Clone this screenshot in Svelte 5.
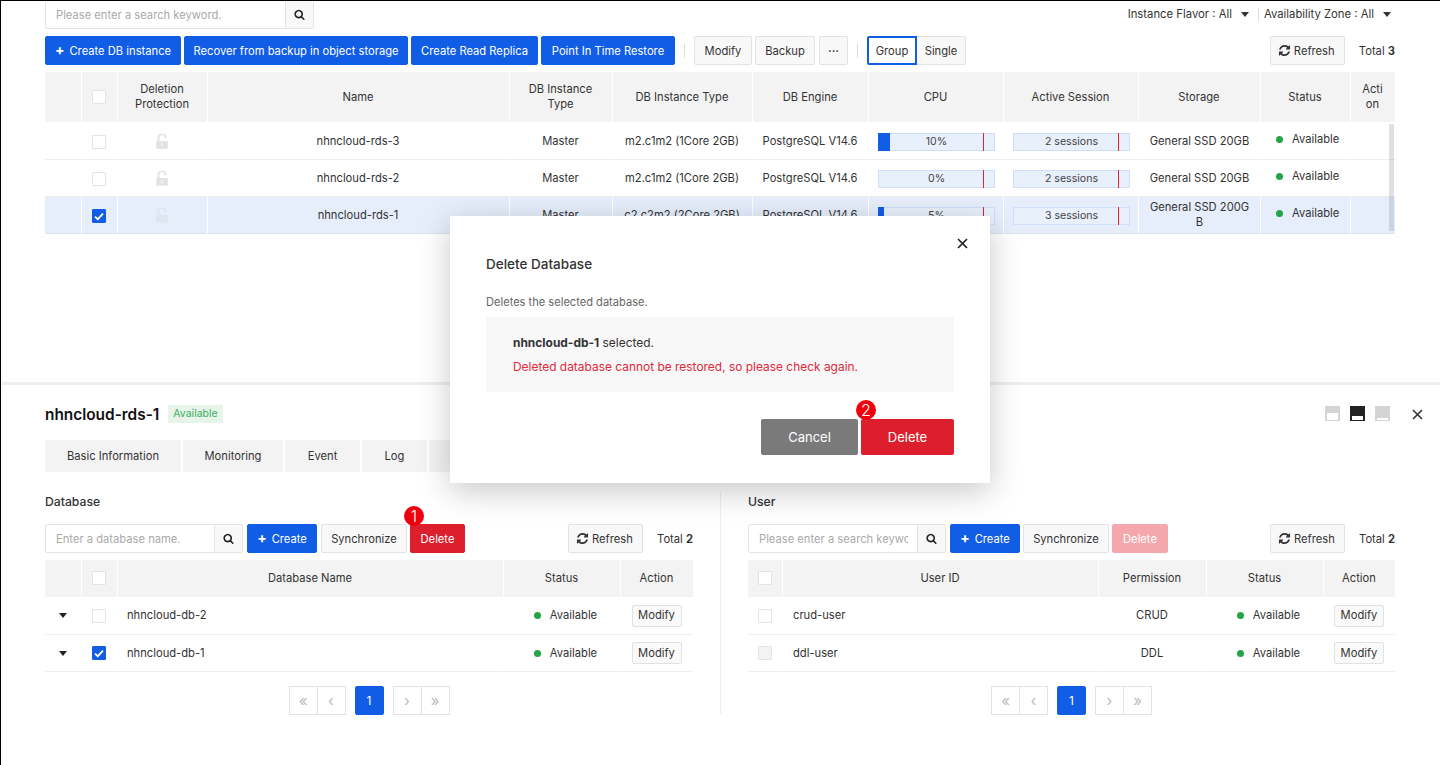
<script>
  const searchD = "M1216 832q0-185-131.5-316.5t-316.5-131.5-316.5 131.5-131.5 316.5 131.5 316.5 316.5 131.5 316.5-131.5 131.5-316.5zm512 832q0 52-38 90t-90 38q-54 0-90-38l-343-342q-179 124-399 124-143 0-273.5-55.5t-225-150-150-225-55.5-273.5 55.5-273.5 150-225 225-150 273.5-55.5 273.5 55.5 225 150 150 225 55.5 273.5q0 220-124 399l343 343q37 37 37 90z";
  const refreshD = "M1639 1056q0 5-1 7-64 268-268 434.5t-478 166.5q-146 0-282.5-55t-243.5-157l-129 129q-19 19-45 19t-45-19-19-45v-448q0-26 19-45t45-19h448q26 0 45 19t19 45-19 45l-137 137q71 66 161 102t187 36q134 0 250-65t186-179q11-17 53-117 8-23 30-23h192q13 0 22.5 9.5t9.5 22.5zm25-800v448q0 26-19 45t-45 19h-448q-26 0-45-19t-19-45 19-45l138-138q-148-137-349-137-134 0-250 65t-186 179q-11 17-53 117-8 23-30 23h-199q-13 0-22.5-9.5t-9.5-22.5v-7q65-268 270-434.5t480-166.5q146 0 284 55.5t245 156.5l130-129q19-19 45-19t45 19 19 45z";
  const unlockD = "M1376 768q40 0 68 28t28 68v576q0 40-28 68t-68 28h-960q-40 0-68-28t-28-68v-576q0-40 28-68t68-28h32v-320q0-185 131.5-316.5t316.5-131.5 316.5 131.5 131.5 316.5q0 26-19 45t-45 19h-64q-26 0-45-19t-19-45q0-106-75-181t-181-75-181 75-75 181v320h736z";

  const instances = [
    { name: "nhncloud-rds-3", type: "m2.c1m2 (1Core 2GB)", cpu: 10, session: "2 sessions", storage: "General SSD 20GB", sel: false },
    { name: "nhncloud-rds-2", type: "m2.c1m2 (1Core 2GB)", cpu: 0, session: "2 sessions", storage: "General SSD 20GB", sel: false },
    { name: "nhncloud-rds-1", type: "c2.c2m2 (2Core 2GB)", cpu: 5, session: "3 sessions", storage: "General SSD 200GB", sel: true }
  ];
  const instanceCols = [37, 36, 90, 302, 103, 140, 116, 135, 135, 122, 90, 44];
  const tabs = [
    { label: "Basic Information", w: 136 },
    { label: "Monitoring", w: 100 },
    { label: "Event", w: 75 },
    { label: "Log", w: 65 },
    { label: "Backup", w: 90 }
  ];
  const dbs = [{ name: "nhncloud-db-2", sel: false }, { name: "nhncloud-db-1", sel: true }];
  const users = [
    { name: "crud-user", perm: "CRUD", off: false },
    { name: "ddl-user", perm: "DDL", off: true }
  ];
</script>

{#snippet search(d, size)}
  <svg width={size} height={size} viewBox="0 0 1792 1792" fill="#222"><path {d} /></svg>
{/snippet}

{#snippet refreshBtn()}
  <button class="btn refresh"><svg class="ri" width="13" height="13" viewBox="0 0 1792 1792" fill="#333"><path d={refreshD} /></svg>Refresh</button>
{/snippet}

{#snippet check(on, off)}
  <span class="cb" class:on class:off>
    {#if on}
      <svg width="10" height="9" viewBox="0 0 10 9"><path d="M1 4.6 3.8 7.2 9 1.6" fill="none" stroke="#fff" stroke-width="1.8" /></svg>
    {/if}
  </span>
{/snippet}

{#snippet status(cls)}
  <span class="status {cls}"><i></i>Available</span>
{/snippet}

{#snippet pager()}
  <div class="pager">
    <div class="pgroup">
      <span class="pg">«</span><span class="pg">‹</span>
    </div>
    <span class="pg cur">1</span>
    <div class="pgroup">
      <span class="pg">›</span><span class="pg">»</span>
    </div>
  </div>
{/snippet}

<div class="page">
  <section class="top">
    <div class="filter-row">
      <div class="searchbox main">
        <span class="ph">Please enter a search keyword.</span>
        <span class="sbtn">{@render search(searchD, 11)}</span>
      </div>
      <div class="filters">
        <span>Instance Flavor : All</span><b class="caret"></b>
        <em></em>
        <span>Availability Zone : All</span><b class="caret"></b>
      </div>
    </div>

    <div class="toolbar">
      <button class="btn blue"><span class="plus">+</span>Create DB instance</button>
      <button class="btn blue">Recover from backup in object storage</button>
      <button class="btn blue">Create Read Replica</button>
      <button class="btn blue">Point In Time Restore</button>
      <span class="sep"></span>
      <button class="btn">Modify</button>
      <button class="btn">Backup</button>
      <button class="btn dots">···</button>
      <span class="sep"></span>
      <div class="seg">
        <button class="btn active">Group</button>
        <button class="btn">Single</button>
      </div>
      <div class="push">
        {@render refreshBtn()}
        <span class="total">Total <b>3</b></span>
      </div>
    </div>

    <div class="tablewrap">
      <table class="grid inst">
        <colgroup>
          {#each instanceCols as w}<col style:width="{w}px" />{/each}
        </colgroup>
        <thead>
          <tr>
            <th></th>
            <th>{@render check(false, false)}</th>
            <th>Deletion<br />Protection</th>
            <th>Name</th>
            <th>DB Instance<br />Type</th>
            <th>DB Instance Type</th>
            <th>DB Engine</th>
            <th>CPU</th>
            <th>Active Session</th>
            <th>Storage</th>
            <th>Status</th>
            <th>Acti<br />on</th>
          </tr>
        </thead>
        <tbody>
          {#each instances as r}
            <tr class:sel={r.sel}>
              <td></td>
              <td>{@render check(r.sel, false)}</td>
              <td>
                <svg class="lock" width="12" height="15" viewBox="300 100 1190 1450" fill="#e2e2e2"><path d={unlockD} /><rect x="830" y="1000" width="130" height="260" fill="#fff" /></svg>
              </td>
              <td>{r.name}</td>
              <td>Master</td>
              <td>{r.type}</td>
              <td>PostgreSQL V14.6</td>
              <td>
                <div class="bar">
                  <span class="fill" style:width="{r.cpu}%"></span>
                  <span class="mark"></span>
                  <span class="val">{r.cpu}%</span>
                </div>
              </td>
              <td>
                <div class="bar">
                  <span class="mark"></span>
                  <span class="val">{r.session}</span>
                </div>
              </td>
              <td class="storage">{r.storage}</td>
              <td class="left">{@render status("up")}</td>
              <td></td>
            </tr>
          {/each}
        </tbody>
      </table>
      <div class="scrollbar"></div>
    </div>
  </section>

  <section class="detail">
    <div class="head">
      <strong>nhncloud-rds-1</strong>
      <span class="badge">Available</span>
      <div class="viewctl">
        <span class="vi"><i></i></span>
        <span class="vi dark"><i></i></span>
        <span class="vi low"><i></i></span>
        <svg class="xicon" width="11" height="11" viewBox="0 0 11 11"><path d="M1 1 10 10M10 1 1 10" stroke="#333" stroke-width="1.6" /></svg>
      </div>
    </div>

    <div class="tabs">
      {#each tabs as t}
        <span class="tab" style:width="{t.w}px">{t.label}</span>
      {/each}
    </div>

    <div class="panels">
      <div class="panel">
        <h3>Database</h3>
        <div class="ptools">
          <div class="searchbox small">
            <span class="ph">Enter a database name.</span>
            <span class="sbtn">{@render search(searchD, 11)}</span>
          </div>
          <button class="btn blue create"><span class="plus">+</span>Create</button>
          <button class="btn sync">Synchronize</button>
          <div class="delwrap">
            <button class="btn red">Delete</button>
            <span class="pin one">1</span>
          </div>
          <div class="push">
            {@render refreshBtn()}
            <span class="total">Total <b>2</b></span>
          </div>
        </div>
        <table class="grid sub">
          <colgroup><col style:width="37px" /><col style:width="36px" /><col /><col style:width="117px" /><col style:width="72px" /></colgroup>
          <thead>
            <tr><th></th><th>{@render check(false, false)}</th><th>Database Name</th><th>Status</th><th>Action</th></tr>
          </thead>
          <tbody>
            {#each dbs as d}
              <tr>
                <td><b class="caret dark"></b></td>
                <td>{@render check(d.sel, false)}</td>
                <td class="left name">{d.name}</td>
                <td class="stat">{@render status("")}</td>
                <td><button class="btn mini">Modify</button></td>
              </tr>
            {/each}
          </tbody>
        </table>
        {@render pager()}
      </div>

      <div class="panel right">
        <h3>User</h3>
        <div class="ptools">
          <div class="searchbox small">
            <span class="ph">Please enter a search keyword.</span>
            <span class="sbtn">{@render search(searchD, 11)}</span>
          </div>
          <button class="btn blue create"><span class="plus">+</span>Create</button>
          <button class="btn sync">Synchronize</button>
          <button class="btn red faded">Delete</button>
          <div class="push">
            {@render refreshBtn()}
            <span class="total">Total <b>2</b></span>
          </div>
        </div>
        <table class="grid sub">
          <colgroup><col style:width="35px" /><col /><col style:width="108px" /><col style:width="117px" /><col style:width="71px" /></colgroup>
          <thead>
            <tr><th>{@render check(false, false)}</th><th>User ID</th><th>Permission</th><th>Status</th><th>Action</th></tr>
          </thead>
          <tbody>
            {#each users as u}
              <tr>
                <td>{@render check(false, u.off)}</td>
                <td class="left name">{u.name}</td>
                <td>{u.perm}</td>
                <td class="stat">{@render status("")}</td>
                <td><button class="btn mini">Modify</button></td>
              </tr>
            {/each}
          </tbody>
        </table>
        {@render pager()}
      </div>
    </div>
  </section>

  <div class="modal">
    <svg class="mclose" width="11" height="11" viewBox="0 0 11 11"><path d="M1 1 10 10M10 1 1 10" stroke="#222" stroke-width="1.7" /></svg>
    <h2>Delete Database</h2>
    <p class="desc">Deletes the selected database.</p>
    <div class="notice">
      <p><b>nhncloud-db-1</b> selected.</p>
      <p class="warn">Deleted database cannot be restored, so please check again.</p>
    </div>
    <div class="mfoot">
      <button class="mbtn cancel">Cancel</button>
      <div class="delwrap">
        <button class="mbtn del">Delete</button>
        <span class="pin two">2</span>
      </div>
    </div>
  </div>
</div>

<style>
  :global(body) { margin: 0; background: #fff; }
  * { box-sizing: border-box; }
  .page {
    position: relative;
    width: 1440px;
    height: 765px;
    overflow: hidden;
    border-top: 1px solid #000;
    border-left: 1px solid #000;
    font-family: Inter, "Noto Sans", sans-serif;
    font-size: 11.2px;
    color: #333;
  }
  .top { height: 381px; padding: 0 45px 0 44px; }
  .filter-row { display: flex; justify-content: space-between; height: 28px; }
  .searchbox {
    display: flex;
    background: #fff;
    border: 1px solid #e4e4e4;
    border-radius: 2px;
    color: #aaa;
    overflow: hidden;
  }
  .searchbox.main { width: 269px; height: 28px; border-top: 0; }
  .searchbox.small { width: 198px; height: 29px; }
  .ph {
    flex: 1;
    min-width: 0;
    padding-left: 10px;
    line-height: 28px;
    white-space: nowrap;
    overflow: hidden;
  }
  .small .ph { margin-right: 9px; }
  .sbtn {
    flex: 0 0 28px;
    display: flex;
    align-items: center;
    justify-content: center;
    background: #f8f8f8;
    border-left: 1px solid #e4e4e4;
  }
  .filters {
    display: flex;
    align-items: center;
    height: 26px;
    padding-right: 4px;
    font-size: 11.3px;
    color: #333;
  }
  .filters em { width: 1px; height: 13px; background: #ddd; margin: 0 5px 0 9px; }
  .caret {
    display: inline-block;
    margin-left: 9px;
    border-style: solid;
    border-width: 5px 4px 0;
    border-color: #333 transparent transparent;
  }
  .caret.dark { display: block; width: 0; margin: 0 auto; border-color: #222 transparent transparent; }

  .toolbar { display: flex; align-items: center; height: 29px; margin-top: 7px; gap: 3px; }
  .btn {
    height: 29px;
    padding: 0 10px;
    background: #f8f8f8;
    border: 1px solid #e2e2e2;
    border-radius: 2px;
    color: #333;
    font: inherit;
    white-space: nowrap;
  }
  .btn.blue { background: #125de6; border-color: #125de6; color: #fff; }
  .toolbar > .btn.blue:nth-child(1) { width: 136px; padding: 0; }
  .toolbar > .btn.blue:nth-child(2) { width: 224px; padding: 0; }
  .toolbar > .btn.blue:nth-child(3) { width: 127px; padding: 0; }
  .toolbar > .btn.blue:nth-child(4) { width: 134px; padding: 0; }
  .plus { font-weight: 700; font-size: 14px; line-height: 12px; margin-right: 5px; }
  .sep { width: 1px; height: 14px; background: #ddd; margin: 0 6px; }
  .toolbar > .btn:nth-of-type(5) { width: 58px; padding: 0; }
  .toolbar > .btn:nth-of-type(6) { width: 60px; padding: 0; }
  .dots { width: 29px; padding: 0; margin-left: 1px; font-weight: 700; }
  .seg { display: flex; }
  .seg .btn { width: 49px; padding: 0; border-radius: 0 2px 2px 0; border-left: 0; }
  .seg .active {
    width: 50px;
    background: #fff;
    border: 2px solid #125de6;
    border-radius: 2px 0 0 2px;
  }
  .push { margin-left: auto; display: flex; align-items: center; }
  .refresh { display: flex; align-items: center; gap: 3px; padding: 0 0 0 7px; width: 75px; }
  .ri { flex: none; }
  .total { margin-left: 14px; white-space: nowrap; }

  .tablewrap { position: relative; margin-top: 7px; }
  .scrollbar {
    position: absolute;
    left: 1344px;
    top: 52px;
    width: 5px;
    height: 107px;
    background: rgba(120, 130, 150, 0.25);
  }
  table.grid { border-collapse: separate; border-spacing: 0; table-layout: fixed; width: 100%; }
  table.inst { width: 1350px; }
  th {
    padding: 0 1px 0 0;
    background: #f3f3f3;
    border-right: 1px solid #fff;
    font-weight: 400;
    line-height: 15px;
    text-align: center;
  }
  th:last-child { border-right: 0; }
  .inst th { height: 50px; }
  td {
    padding: 0 1px 0 0;
    border-bottom: 1px solid #eee;
    border-right: 1px solid #fff;
    text-align: center;
    line-height: 15px;
    color: #333;
  }
  td:last-child { border-right: 0; }
  .inst td { height: 37px; }
  tbody tr:first-child td { height: 38px; }
  .inst tbody tr:first-child td { padding-top: 1px; }
  tr.sel td { background: #e6eefb; border-bottom-color: #dde3ee; }
  td.left { text-align: left; }
  td.name { padding-left: 9px; }
  .right td.name { padding-left: 10px; }
  td.stat { padding-left: 8px; }
  .inst td.storage { word-break: break-all; padding-left: 10px; padding-right: 10px; }
  .inst td.left { padding-left: 15px; }
  .lock { display: block; margin: 0 auto; }
  .sel .lock { fill: #dfe5ee; }
  .sel .lock rect { fill: #e6eefb; }

  .cb {
    display: inline-block;
    width: 14px;
    height: 14px;
    background: #fff;
    border: 1px solid #e4e4e4;
    border-radius: 1px;
    vertical-align: middle;
  }
  .inst td .cb { position: relative; top: 1px; }
  th .cb { margin-top: -1px; }
  .cb.on {
    display: inline-flex;
    align-items: center;
    justify-content: center;
    background: #125de6;
    border-color: #125de6;
  }
  .cb.off { background: #f3f3f3; }

  .bar {
    position: relative;
    width: 117px;
    height: 18px;
    margin: 1px 0 0 9px;
    background: #e8f0fc;
    border: 1px solid #cfdff9;
  }
  .fill { position: absolute; left: -1px; top: -1px; bottom: -1px; background: #125de6; }
  .mark { position: absolute; left: 104px; top: -1px; bottom: -1px; width: 1px; background: #e8222f; }
  .val { position: relative; display: block; font-size: 10.6px; line-height: 16px; text-align: center; color: #444; }

  .status { display: inline-flex; align-items: center; white-space: nowrap; color: #333; }
  .status.up { position: relative; top: -2px; }
  .status i { width: 7px; height: 7px; margin-right: 9px; border-radius: 50%; background: #22a447; }

  .detail { border-top: 3px solid #eee; height: 380px; padding: 0 45px 0 44px; }
  .head { display: flex; align-items: center; height: 20px; margin-top: 19px; }
  .head strong { font-size: 15.4px; font-weight: 600; color: #111; }
  .badge {
    margin-left: 9px;
    padding: 0 5px;
    height: 18px;
    line-height: 18px;
    background: #e6f4ea;
    color: #3cae5e;
    font-size: 10.5px;
  }
  .viewctl { margin-left: auto; display: flex; align-items: center; margin-right: -28px; }
  .vi {
    position: relative;
    top: -1px;
    width: 15px;
    height: 15px;
    margin-right: 10px;
    background: #d4d4d4;
  }
  .vi i { position: absolute; left: 2px; right: 2px; bottom: 1px; height: 7px; background: #fff; }
  .vi.dark { background: #222; }
  .vi.dark i { height: 4px; }
  .vi.low i { height: 2px; }
  .xicon { margin-left: 12px; }

  .tabs { display: flex; gap: 2px; margin-top: 16px; }
  .tab {
    height: 32px;
    line-height: 32px;
    text-align: center;
    background: #f3f3f3;
    color: #333;
  }

  .panels { display: flex; margin-top: 21px; }
  .panel { width: 648px; }
  .panel.right { width: 675px; margin-left: 27px; padding-left: 27px; border-left: 1px solid #eee; height: 222px; margin-top: -1px; padding-top: 1px; }
  .panel h3 { margin: 0; height: 18px; font-size: 12.2px; font-weight: 500; line-height: 18px; color: #333; }
  .ptools { display: flex; align-items: center; height: 29px; margin-top: 13px; gap: 4px; }
  .create { width: 70px; padding: 0; }
  .sync { width: 86px; padding: 0; }
  .right .sync { margin-left: -1px; }
  .ptools .delwrap { margin-left: -1px; }
  .delwrap { position: relative; }
  .btn.red { width: 55px; padding: 0; background: #dd1f2d; border-color: #dd1f2d; color: #fff; }
  .btn.red.faded { width: 56px; margin-left: -1px; background: #f4a8ad; border-color: #f4a8ad; }
  .pin {
    position: absolute;
    display: flex;
    align-items: center;
    justify-content: center;
    width: 20px;
    height: 20px;
    border-radius: 50%;
    background: #f0000c;
    color: #fff;
    font-size: 16px;
    font-weight: 300;
  }
  .pin.one { left: -6px; top: -18px; }
  .pin.two { left: -5px; top: -19px; }
  .sub { margin-top: 7px; }
  .sub th { height: 37px; }
  .sub td { height: 37px; }
  .btn.mini { height: 22px; padding: 0; width: 50px; background: #fafafa; }
  .pager { display: flex; justify-content: center; gap: 9px; margin-top: 14px; }
  .pgroup { display: flex; }
  .pg {
    width: 29px;
    height: 29px;
    display: flex;
    align-items: center;
    justify-content: center;
    background: #fff;
    border: 1px solid #e2e2e2;
    color: #bbb;
    font-size: 15px;
  }
  .pgroup .pg + .pg { margin-left: -1px; }
  .pg.cur { background: #125de6; border-color: #125de6; color: #fff; font-size: 12px; border-radius: 2px; }

  .modal {
    position: absolute;
    left: 449px;
    top: 215px;
    width: 540px;
    height: 267px;
    padding: 0 36px;
    background: #fff;
    box-shadow: 0 8px 30px rgba(0, 0, 0, 0.22);
    font-size: 11.95px;
  }
  .mclose { position: absolute; right: 22px; top: 22px; }
  .modal h2 { margin: 38px 0 0; font-size: 13.5px; font-weight: 500; line-height: 20px; color: #333; }
  .desc { margin: 21px 0 0; font-size: 11.1px; line-height: 15px; color: #666; }
  .notice {
    height: 75px;
    margin-top: 7px;
    padding: 18px 27px;
    background: #f8f8f8;
  }
  .notice p { margin: 0; line-height: 15px; color: #333; }
  .notice .warn { margin-top: 9px; color: #e2283a; }
  .notice b { font-weight: 700; }
  .mfoot { display: flex; justify-content: flex-end; gap: 3px; margin-top: 27px; }
  .mbtn { height: 36px; border: 0; border-radius: 2px; font: inherit; font-size: 13px; color: #fff; }
  .cancel { width: 97px; background: #7a7a7a; }
  .del { width: 93px; background: #dd1f2d; display: block; }
</style>
